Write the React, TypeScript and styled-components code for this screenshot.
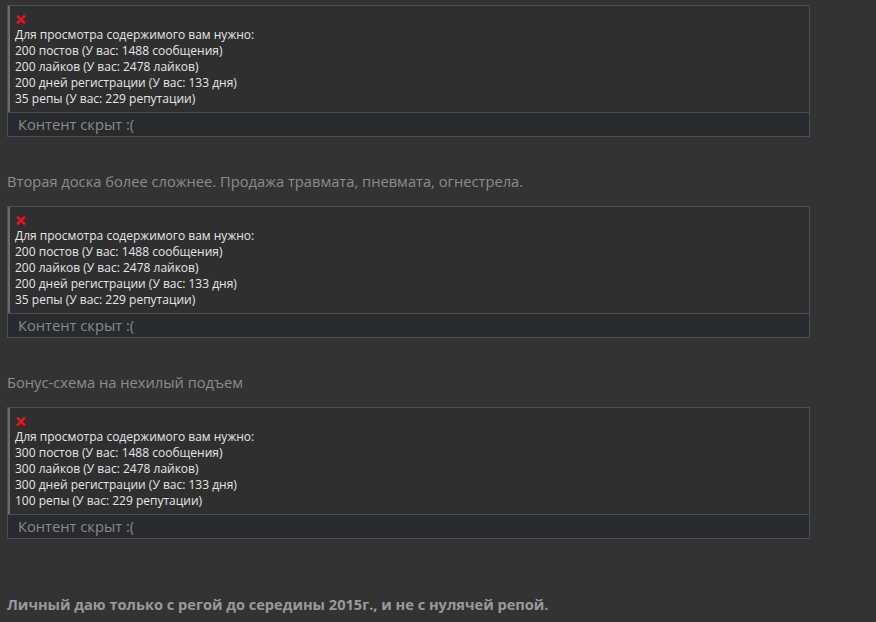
import React from "react";
import styled, { createGlobalStyle } from "styled-components";

const Global = createGlobalStyle`
  html, body {
    margin: 0;
    padding: 0;
    background: #333333;
  }
  body {
    font-family: "Open Sans", "DejaVu Sans", sans-serif;
  }
`;

const Page = styled.div`
  padding: 5px 0 0 7px;
  width: 803px;
  color: #8c8c8c;
`;

const HiddenBox = styled.div`
  border: 1px solid #4a4f56;
  background: #2f2f2f;
`;

const Quote = styled.div`
  border-left: 2px solid #6b6b6b;
  padding: 5px 5px 5px 5px;
  font-size: 12px;
  line-height: 16px;
  color: #e6e6e6;
`;

const Line = styled.div`
  white-space: nowrap;
`;

const Cross = styled.div`
  height: 16px;
  display: flex;
  align-items: center;
  padding-left: 1px;
`;

const Footer = styled.div`
  border-top: 1px solid #4a4f56;
  background: #272a2e;
  height: 23px;
  padding-left: 10px;
  font-size: 14.7px;
  line-height: 23px;
  color: #8a8a8a;
`;

const Para = styled.p`
  margin: 34px 0 15px 0;
  font-size: 14.7px;
  line-height: 20px;
  color: #8c8c8c;
`;

const BoldPara = styled.p`
  margin: 55px 0 0 0;
  font-size: 14.6px;
  line-height: 20px;
  font-weight: 700;
  color: #9a9a9a;
`;

type Req = { posts: number; likes: number; days: number; rep: number };

const RedX = () => (
  <svg width="10" height="9" viewBox="0 0 10 9">
    <path d="M1 0.5 L9 8.5 M9 0.5 L1 8.5" stroke="#f0141a" strokeWidth="2.4" />
  </svg>
);

const Hidden: React.FC<{ req: Req }> = ({ req }) => (
  <HiddenBox>
    <Quote>
      <Cross>
        <RedX />
      </Cross>
      <Line>Для просмотра содержимого вам нужно:</Line>
      <Line>{req.posts} постов (У вас: 1488 сообщения)</Line>
      <Line>{req.likes} лайков (У вас: 2478 лайков)</Line>
      <Line>{req.days} дней регистрации (У вас: 133 дня)</Line>
      <Line>{req.rep} репы (У вас: 229 репутации)</Line>
    </Quote>
    <Footer>Контент скрыт :(</Footer>
  </HiddenBox>
);

export default function App() {
  return (
    <>
      <Global />
      <Page>
        <Hidden req={{ posts: 200, likes: 200, days: 200, rep: 35 }} />
        <Para>Вторая доска более сложнее. Продажа травмата, пневмата, огнестрела.</Para>
        <Hidden req={{ posts: 200, likes: 200, days: 200, rep: 35 }} />
        <Para>Бонус-схема на нехилый подъем</Para>
        <Hidden req={{ posts: 300, likes: 300, days: 300, rep: 100 }} />
        <BoldPara>Личный даю только с регой до середины 2015г., и не с нулячей репой.</BoldPara>
      </Page>
    </>
  );
}
